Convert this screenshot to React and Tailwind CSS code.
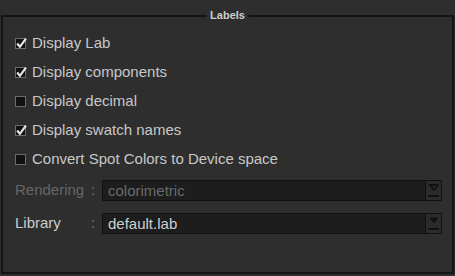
import React from 'react';

const font = { fontFamily: '"Liberation Sans", Arial, sans-serif' };

const options = [
  { label: 'Display Lab', checked: true },
  { label: 'Display components', checked: true },
  { label: 'Display decimal', checked: false },
  { label: 'Display swatch names', checked: true },
  { label: 'Convert Spot Colors to Device space', checked: false },
];

const Check = ({ checked }) => (
  <span className="relative w-[11px] h-[11px] border border-[#6c6c6c] bg-[#111] shrink-0">
    {checked && (
      <svg viewBox="0 0 11 11" className="absolute -left-px -top-[2px] w-[12px] h-[12px]">
        <path d="M2 6 L4.5 9 L10 1.5" fill="none" stroke="#e6e6e6" strokeWidth="2" />
      </svg>
    )}
  </span>
);

const Arrow = ({ disabled }) => (
  <div className="w-[16px] h-full border-l border-[#111] bg-[#2b2b2b] flex flex-col items-center justify-center gap-[4px]">
    <svg viewBox="0 0 10 7" className="w-[10px] h-[7px]">
      {disabled ? (
        <path d="M1 1 H9 L5 6 Z" fill="none" stroke="#111" strokeWidth="1.8" />
      ) : (
        <path d="M0.5 0.5 H9.5 L5 6.5 Z" fill="#111" />
      )}
    </svg>
    <div className="w-[11px] h-[2px] bg-[#111]" />
  </div>
);

const SelectRow = ({ label, value, disabled, h }) => (
  <div className={`flex items-center ${h}`}>
    <span className={`w-[76px] text-[15px] ${disabled ? 'text-[#666]' : 'text-[#cccccc]'}`}>{label}</span>
    <span className="w-[11px] text-[15px] text-[#777]">:</span>
    <div className="flex-1 h-full flex border border-[#111] bg-[#1d1d1d]">
      <span className={`flex-1 pl-[5px] text-[15px] leading-[19px] ${disabled ? 'text-[#6a6a6a]' : 'text-[#d0d0d0]'}`}>
        {value}
      </span>
      <Arrow disabled={disabled} />
    </div>
  </div>
);

export default function App() {
  return (
    <div className="w-[455px] h-[276px] bg-[#2e2e2e] pt-[15px] px-[1px]" style={font}>
      <div className="relative h-[259px] border-2 border-[#141414] pl-[12px] pr-[10px] pt-[12px]">
        <span className="absolute left-1/2 -translate-x-1/2 -top-[8px] px-[4px] bg-[#2e2e2e] text-[11px] font-bold text-[#cfcfcf] leading-[13px]">
          Labels
        </span>
        <div className="flex flex-col">
          {options.map((o) => (
            <div key={o.label} className="flex items-center gap-[6px] h-[29px]">
              <Check checked={o.checked} />
              <span className="text-[15px] text-[#c8c8c8]">{o.label}</span>
            </div>
          ))}
        </div>
        <div className="flex flex-col gap-[12px] mt-[6px]">
          <SelectRow label="Rendering" value="colorimetric" disabled h="h-[21px]" />
          <SelectRow label="Library" value="default.lab" h="h-[21px]" />
        </div>
      </div>
    </div>
  );
}
